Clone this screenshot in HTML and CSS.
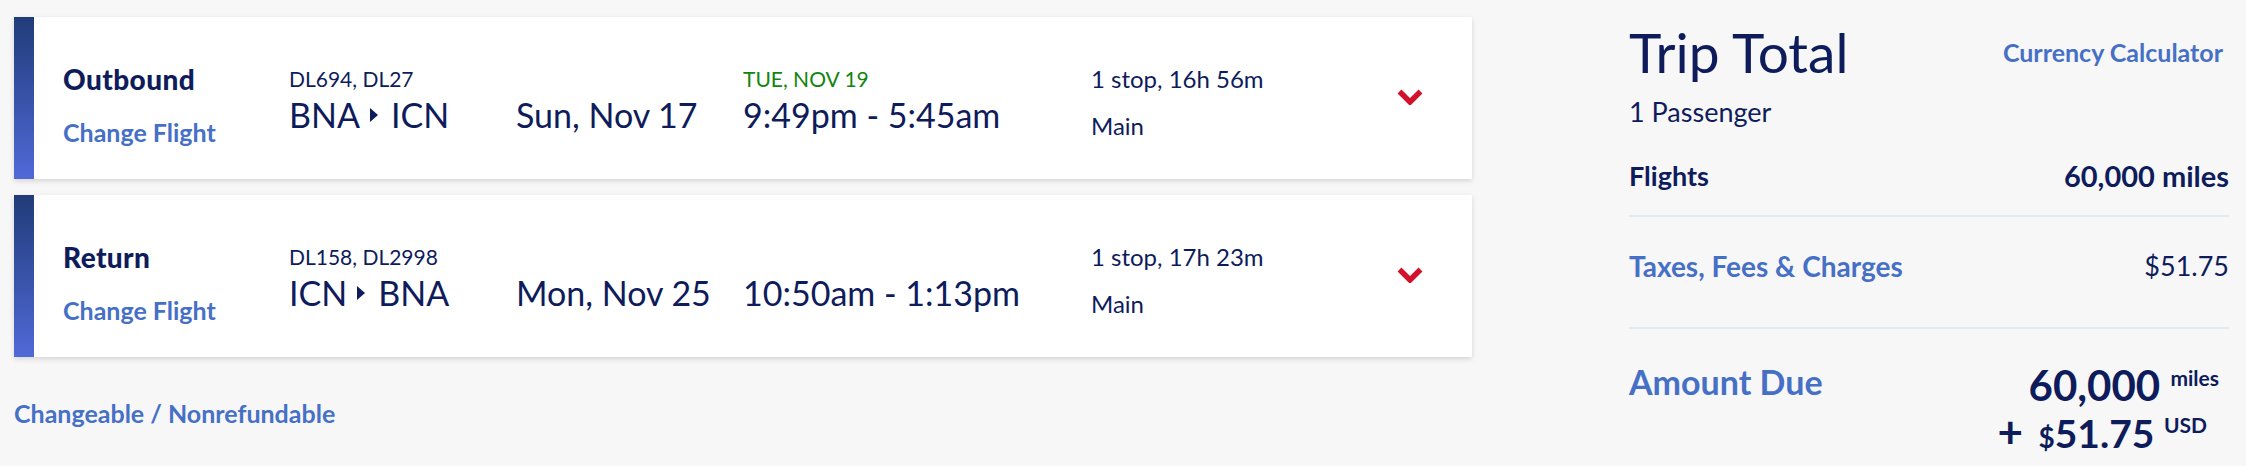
FILE: index.html
```html
<!DOCTYPE html>
<html>
<head>
  <title>Trip Summary</title>
  <link rel="stylesheet" href="styles.css">
</head>
<body>
  <div class="page">
    <div class="flights">
      <div class="card">
        <div class="card-bar"></div>
        <div class="card-body">
          <div class="col col-leg">
            <div class="leg-name">Outbound</div>
            <a class="link change-link" href="#">Change Flight</a>
          </div>
          <div class="col col-route">
            <div class="line-sm">DL694, DL27</div>
            <div class="line-lg">BNA <span class="arrow"></span> ICN</div>
          </div>
          <div class="col col-date">
            <div class="line-sm"></div>
            <div class="line-lg">Sun, Nov 17</div>
          </div>
          <div class="col col-time">
            <div class="line-sm arrive-date">TUE, NOV 19</div>
            <div class="line-lg">9:49pm - 5:45am</div>
          </div>
          <div class="col col-stops">
            <div class="line-md">1 stop, 16h 56m</div>
            <div class="line-md cabin">Main</div>
          </div>
          <div class="col col-toggle">
            <svg class="chevron" width="26" height="16" viewBox="0 0 26 16"><polyline points="2.5,2.5 13,13 23.5,2.5" fill="none" stroke="#d2112b" stroke-width="5.5"/></svg>
          </div>
        </div>
      </div>

      <div class="card">
        <div class="card-bar"></div>
        <div class="card-body">
          <div class="col col-leg">
            <div class="leg-name">Return</div>
            <a class="link change-link" href="#">Change Flight</a>
          </div>
          <div class="col col-route">
            <div class="line-sm">DL158, DL2998</div>
            <div class="line-lg">ICN <span class="arrow"></span> BNA</div>
          </div>
          <div class="col col-date">
            <div class="line-sm"></div>
            <div class="line-lg">Mon, Nov 25</div>
          </div>
          <div class="col col-time">
            <div class="line-sm"></div>
            <div class="line-lg">10:50am - 1:13pm</div>
          </div>
          <div class="col col-stops">
            <div class="line-md">1 stop, 17h 23m</div>
            <div class="line-md cabin">Main</div>
          </div>
          <div class="col col-toggle">
            <svg class="chevron" width="26" height="16" viewBox="0 0 26 16"><polyline points="2.5,2.5 13,13 23.5,2.5" fill="none" stroke="#d2112b" stroke-width="5.5"/></svg>
          </div>
        </div>
      </div>

      <a class="link fare-rules" href="#">Changeable / Nonrefundable</a>
    </div>

    <div class="summary">
      <div class="summary-head">
        <h1 class="summary-title">Trip Total</h1>
        <a class="link currency-link" href="#">Currency Calculator</a>
      </div>
      <div class="passengers">1 Passenger</div>

      <div class="sum-row sum-flights">
        <div class="sum-label">Flights</div>
        <div class="sum-value">60,000 miles</div>
      </div>

      <div class="sum-row sum-taxes">
        <a class="link sum-label" href="#">Taxes, Fees &amp; Charges</a>
        <div class="sum-value">$51.75</div>
      </div>

      <div class="sum-row sum-due">
        <div class="link due-label">Amount Due</div>
        <div class="due-values">
          <div class="due-line">60,000 <sup class="unit">miles</sup></div>
          <div class="due-line due-cash"><span class="plus">+</span> <span class="cur">$</span>51.75 <sup class="unit">USD</sup></div>
        </div>
      </div>
    </div>
  </div>
</body>
</html>
```

FILE: styles.css
```css
html, body {
  margin: 0;
  padding: 0;
  background: #f7f7f7;
}
body {
  font-family: Lato, "Noto Sans", sans-serif;
  color: #0e1c5c;
  width: 2246px;
  height: 466px;
  overflow: hidden;
}
.link {
  color: #4670c6;
  font-weight: bold;
  text-decoration: none;
}

.page {
  display: flex;
  padding: 17px 0 0 14px;
}
.flights {
  width: 1458px;
  display: flex;
  flex-direction: column;
}

/* flight cards */
.card {
  display: flex;
  height: 162px;
  background: #fff;
  box-shadow: 0 2px 5px rgba(0, 0, 0, 0.14);
  margin-bottom: 16px;
}
.card-bar {
  width: 20px;
  background: linear-gradient(to bottom, #213c78, #5069d8);
}
.card-body {
  flex: 1;
  display: flex;
  padding: 47px 0 0 29px;
}
.col {
  display: flex;
  flex-direction: column;
}
.col-leg { width: 226px; }
.col-route { width: 227px; }
.col-date { width: 227px; }
.col-time { width: 348px; }
.col-stops { width: 306px; }

.leg-name {
  font-size: 28px;
  font-weight: 900;
  line-height: 30px;
  letter-spacing: 0.4px;
}
.change-link {
  font-size: 25px;
  line-height: 30px;
  margin-top: 23px;
}
.line-sm {
  height: 30px;
  font-size: 21px;
  line-height: 30px;
}
.line-lg {
  font-size: 34px;
  line-height: 40px;
  margin-top: 1px;
  display: flex;
  align-items: center;
}
.line-md {
  font-size: 24px;
  line-height: 30px;
}
.cabin {
  margin-top: 17px;
}
.arrive-date {
  color: #12850f;
}
.arrow {
  width: 0;
  height: 0;
  border-left: 8px solid #0e1c5c;
  border-top: 7px solid transparent;
  border-bottom: 7px solid transparent;
  margin: 0 13px 0 10px;
}
.chevron {
  display: block;
  margin-top: 25px;
}

.fare-rules {
  font-size: 25px;
  line-height: 30px;
  margin-top: 25px;
}

/* trip total */
.summary {
  width: 600px;
  margin-left: 157px;
  margin-top: -17px;
}
.summary-head {
  display: flex;
  justify-content: space-between;
  align-items: center;
  padding-top: 22px;
}
.summary-title {
  margin: 0;
  font-size: 55px;
  font-weight: normal;
  line-height: 60px;
}
.currency-link {
  font-size: 25px;
  line-height: 30px;
  margin-right: 6px;
}
.passengers {
  font-size: 27px;
  line-height: 30px;
  margin-top: 15px;
}
.sum-row {
  display: flex;
  justify-content: space-between;
  align-items: flex-start;
  border-bottom: 2px solid #e3e8f1;
}
.sum-flights {
  padding: 34px 0 24px;
  font-weight: bold;
}
.sum-taxes {
  padding: 34px 0 46px;
}
.sum-label {
  font-size: 27px;
  line-height: 30px;
}
.sum-taxes .sum-label {
  font-size: 28px;
}
.sum-value {
  font-size: 29px;
  line-height: 30px;
}
.sum-taxes .sum-value {
  font-size: 27px;
}
.sum-due {
  padding: 33px 0 10px;
}
.due-label {
  font-size: 34px;
  line-height: 40px;
}
.due-values {
  text-align: right;
  font-weight: bold;
  padding-right: 10px;
}
.due-line {
  font-size: 42px;
  line-height: 46px;
}
.due-cash {
  font-size: 39px;
  padding-right: 12px;
}
.unit {
  font-size: 21px;
  vertical-align: 15px;
  line-height: 0;
}
.plus {
  font-size: 44px;
  margin-right: 6px;
}
.cur {
  font-size: 28px;
}
```
